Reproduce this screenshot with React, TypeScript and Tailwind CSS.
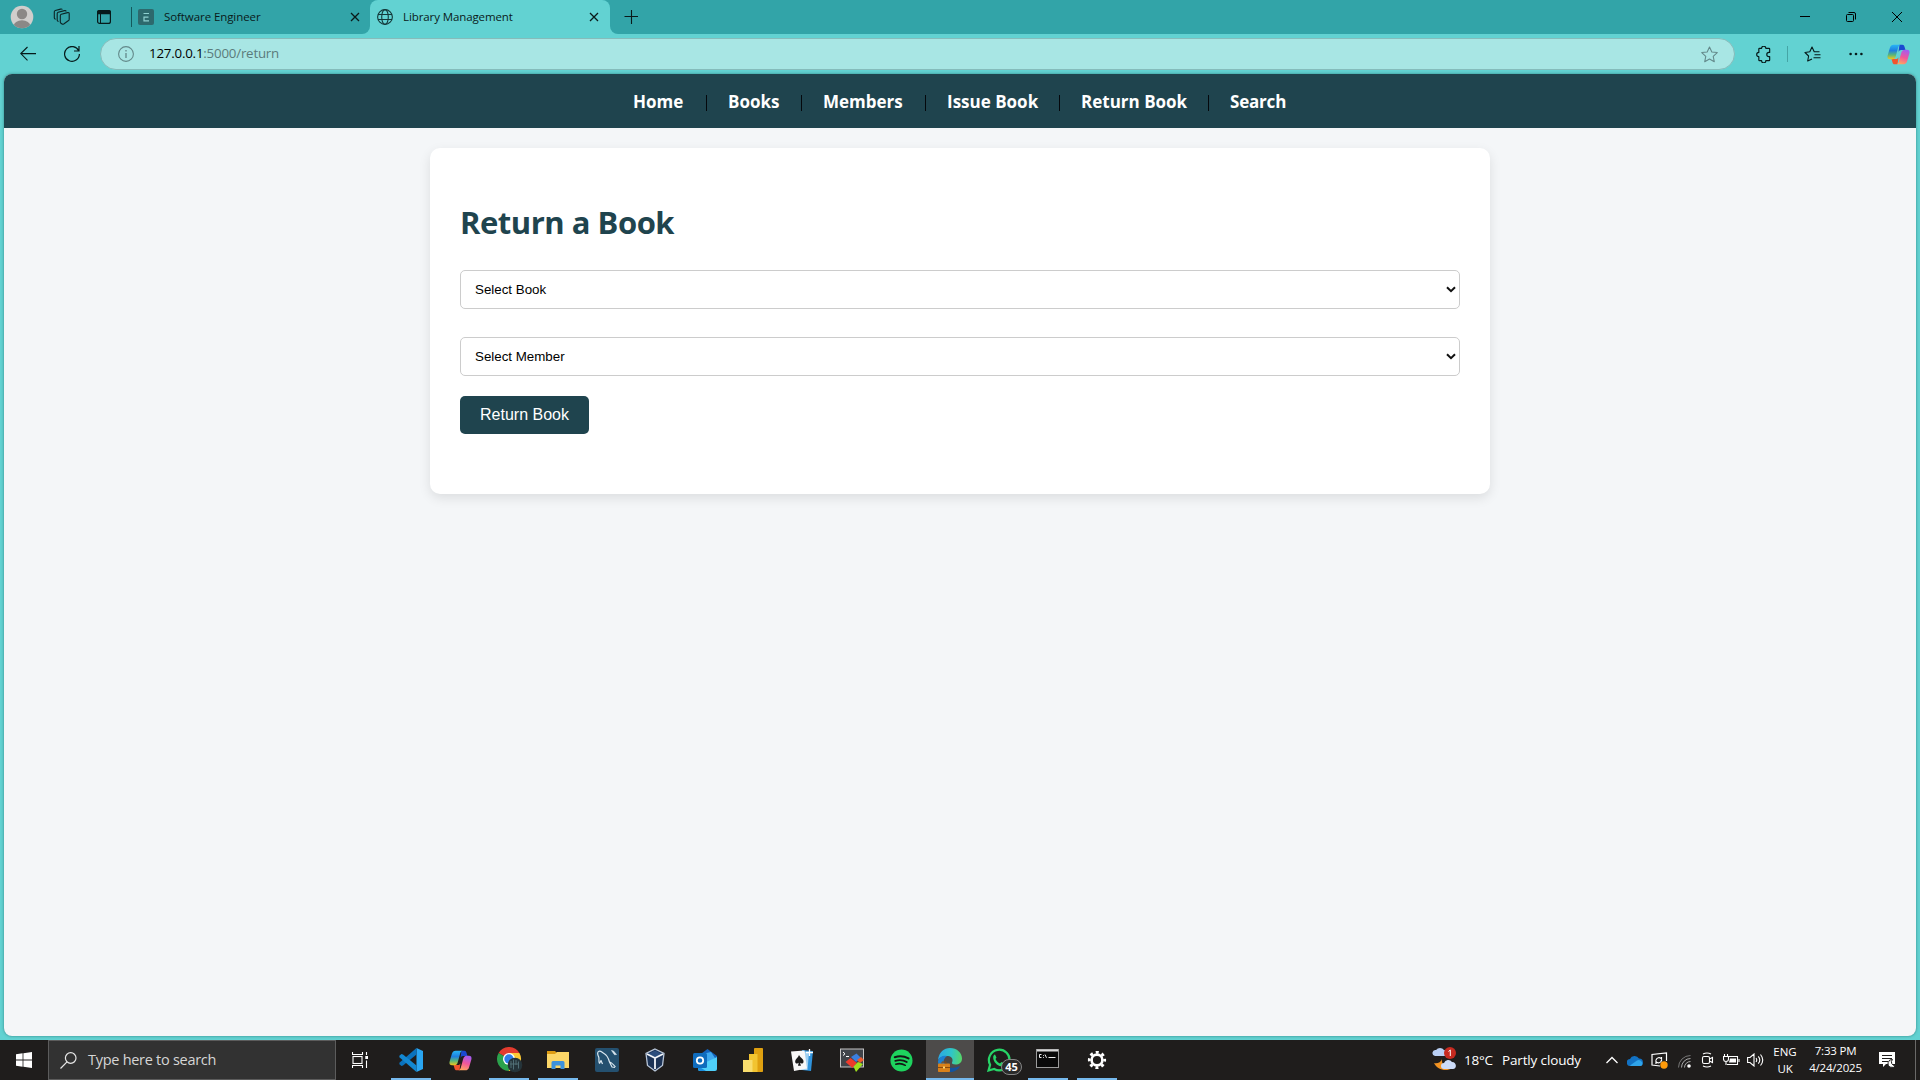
import type { ReactNode } from "react";

const NAV = [
  { label: "Home", cls: "w-[51px]" },
  { label: "Books", cls: "w-[51px]" },
  { label: "Members", cls: "w-[80px]" },
  { label: "Issue Book", cls: "w-[90px]" },
  { label: "Return Book", cls: "w-[105px]" },
  { label: "Search", cls: "w-[56px] tracking-[-0.2px]" },
];

function Copilot({ id, className }: { id: string; className: string }) {
  return (
    <svg viewBox="0 0 24 22" className={className}>
      <defs>
        <linearGradient id={`${id}a`} x1="0" y1="0" x2="0" y2="1">
          <stop offset="0" stopColor="#27b5f5" />
          <stop offset="0.4" stopColor="#1e7fe0" />
          <stop offset="0.7" stopColor="#58b87a" />
          <stop offset="1" stopColor="#f6c61a" />
        </linearGradient>
        <linearGradient id={`${id}b`} x1="0.6" y1="0" x2="0.3" y2="1">
          <stop offset="0" stopColor="#a45cf0" />
          <stop offset="0.5" stopColor="#f0569a" />
          <stop offset="1" stopColor="#ffa660" />
        </linearGradient>
      </defs>
      <path d="M13 .8h3c1.400 0 1.900.8 2.300 2.200l1 3.300h-4.600c-1.400 0-2.200.7-2.700 2.200z" fill="#1a49d0" />
      <path d="M11 21.200H8c-1.400 0-1.900-.8-2.300-2.200l-1-3.300h4.600c1.400 0 2.200-.7 2.700-2.200z" fill="#f2542d" />
      <path d="M7 .8h7c-1.500.4-2 1.700-2.500 3.400L9.200 12.500C8.600 14.700 7.700 16 5.500 16H3.200C.8 16 0 14.300.6 12L3 4C3.700 1.700 4.800.8 7 .8z" fill={`url(#${id}a)`} />
      <path d="M17 21.200h-7c1.500-.4 2-1.700 2.500-3.400l2.300-8.300c.6-2.200 1.500-3.500 3.700-3.500h2.300c2.400 0 3.200 1.700 2.600 4l-2.400 8c-.7 2.300-1.800 3.200-4 3.200z" fill={`url(#${id}b)`} />
    </svg>
  );
}

function Cross({ className }: { className: string }) {
  return (
    <svg viewBox="0 0 10 10" className={className}>
      <path d="M1 1l8 8M9 1L1 9" stroke="currentColor" strokeWidth="1.300" fill="none" />
    </svg>
  );
}

function TitleBar() {
  return (
    <div className="flex h-[34px] items-center bg-[#32a4a8] text-[#0a1a1a]">
      <div className="flex h-[34px] w-[132px] items-center pl-[10px]">
        <svg viewBox="0 0 24 24" className="size-[24px]">
          <defs>
            <clipPath id="avatar"><circle cx="12" cy="12" r="11.300" /></clipPath>
          </defs>
          <circle cx="12" cy="12" r="11.300" fill="#d0cecc" />
          <g clipPath="url(#avatar)" fill="#8b8886">
            <circle cx="12" cy="9" r="5.200" />
            <ellipse cx="12" cy="21" rx="8.300" ry="5.800" />
          </g>
        </svg>
        <svg viewBox="0 0 18 18" className="ml-[19px] size-[18px]" fill="none" stroke="#0b2425" strokeWidth="1.100" strokeLinejoin="round">
          <path d="M7.300 7.600q0-1 1-1.300l6.300-1.700q1.600-.3 1.600 1.200v5.400q0 1-1 1.600l-4.500 3.200q-1 .6-2-.2l-1-.8q-.4-.4-.4-1z" />
          <path d="M5.500 13.600l-.8-.6q-.5-.4-.5-1V5.600q0-1 1-1.300l6.300-1.700q1.400-.3 1.700.9" />
          <path d="M2.600 11.400l-.8-.6q-.5-.4-.5-1V3.800q0-1 1-1.300l5.300-1.400q1.400-.3 1.700.6" />
        </svg>
        <svg viewBox="0 0 16 16" className="ml-[25px] size-[16px]">
          <rect x="1.600" y="1.600" width="12.800" height="12.800" rx="2" fill="none" stroke="#071a1b" strokeWidth="1.200" />
          <path d="M1 5.200V3a2 2 0 0 1 2-2h10a2 2 0 0 1 2 2v2.200z" fill="#071a1b" />
          <path d="M4.500 5v9.500" stroke="#071a1b" />
        </svg>
        <div className="ml-auto h-[20px] w-px bg-[#14595c]" />
      </div>
      <div className="bg-[#62d2d2]">
        <div className="flex h-[34px] w-[238px] items-center rounded-br-lg bg-[#32a4a8] pl-[6px]">
          <div className="flex size-[16px] items-center justify-center rounded-[2px] bg-[#2d696d]">
            <svg viewBox="0 0 8 10" className="h-[10px] w-[8px]" stroke="#8fd0d0" strokeWidth="1.200" fill="none">
              <path d="M1.500 1.500H7M1.500 5.200H6.500M1.500 8.800H7M2 4.600v4.800" />
            </svg>
          </div>
          <span className="ml-[10px] font-['Open_Sans'] text-[11.500px] tracking-[-0.080px] whitespace-nowrap">Software Engineer</span>
          <Cross className="mr-[10px] ml-auto size-[10px]" />
        </div>
      </div>
      <div className="flex h-[34px] w-[240px] items-center rounded-t-lg bg-[#62d2d2] pl-[7px]">
        <svg viewBox="0 0 16 16" className="size-[16px]" fill="none" stroke="#14393a" strokeWidth="1.100">
          <circle cx="8" cy="8" r="7.400" />
          <ellipse cx="8" cy="8" rx="3.300" ry="7.400" />
          <path d="M1 5.500h14M1 10.500h14" />
        </svg>
        <span className="ml-[10px] font-['Open_Sans'] text-[11.500px] tracking-[-0.100px] whitespace-nowrap">Library Management</span>
        <Cross className="mr-[11px] ml-auto size-[10px]" />
      </div>
      <div className="bg-[#62d2d2]">
        <div className="flex h-[34px] w-[40px] items-center rounded-bl-lg bg-[#32a4a8] pl-[14px]">
          <svg viewBox="0 0 14 14" className="size-[14px]" stroke="#0a1a1a" strokeWidth="1.100">
            <path d="M7.500 0v14M.5 6.500h14" />
          </svg>
        </div>
      </div>
      <div className="ml-auto flex h-[34px] items-center gap-[36px] pr-[18px]">
        <svg viewBox="0 0 10 10" className="size-[10px]" stroke="#000"><path d="M0 4.500h10" /></svg>
        <svg viewBox="0 0 10 10" className="size-[10px]" stroke="#000" fill="none">
          <rect x="0.500" y="2.500" width="7" height="7" rx="1" />
          <path d="M2.500 .5H8A1.500 1.500 0 0 1 9.500 2v5.500" />
        </svg>
        <svg viewBox="0 0 10 10" className="size-[10px]" stroke="#000"><path d="M0 0l10 10M10 0L0 10" /></svg>
      </div>
    </div>
  );
}

const STAR = "M8 .9l2.200 4.700 5.100.6-3.800 3.500 1 5.100L8 12.300l-4.500 2.500 1-5.100L.7 6.200l5.100-.6z";

function Toolbar() {
  return (
    <div className="flex h-[40px] items-center bg-[#62d2d2]">
      <svg viewBox="0 0 16 16" className="ml-[20px] size-[16px]" fill="none" stroke="#061a1a" strokeWidth="1.100">
        <path d="M7.500 1L.8 7.600l6.700 6.700M.8 7.600H16" />
      </svg>
      <svg viewBox="0 0 16 16" className="ml-[28px] size-[16px]" fill="none" stroke="#061a1a" strokeWidth="1.200">
        <path d="M14.700 4.800A7.400 7.400 0 1 0 15.400 8M15 0v5h-5" />
      </svg>
      <div className="ml-[20px] flex h-[32px] w-[1635px] items-center rounded-full border border-[#85bcbb] bg-[#a8e6e4] pl-[17px]">
        <svg viewBox="0 0 16 16" className="size-[16px]" fill="none" stroke="#63898a" strokeWidth="1.100">
          <circle cx="8" cy="8" r="7.400" />
          <path d="M8 7v5M8 4v1.500" strokeWidth="1.300" />
        </svg>
        <span className="ml-[15px] font-['Open_Sans'] text-[13.300px] tracking-[-0.200px] whitespace-nowrap text-[#5b7b7b]">
          <span className="text-black">127.0.0.1</span>:5000/return
        </span>
        <svg viewBox="0 0 16 16" className="mr-[16px] ml-auto size-[17px]" fill="none" stroke="#63898a" strokeLinejoin="round">
          <path d={STAR} />
        </svg>
      </div>
      <svg viewBox="0 0 16 16" className="ml-[20px] size-[17px]" fill="none" stroke="#061a1a" strokeWidth="1.100" strokeLinejoin="round">
        <path d="M4.200 2.200H6.200a2 2 0 0 1 4 0h3q.6 0 .6.600V6h-.7a2 2 0 0 0 0 4h.7v3.200q0 .6-.6.600h-3a2 2 0 0 1-4 0h-2q-.6 0-.6-.6V10a2 2 0 0 1 0-4V2.800q0-.6.600-.6z" />
      </svg>
      <div className="ml-[15px] h-[16px] w-px bg-[#45a5a6]" />
      <svg viewBox="0 0 17 16" className="ml-[16px] h-[16px] w-[17px]" fill="none" stroke="#061a1a" strokeWidth="1.100" strokeLinejoin="round">
        <path d="M8 13l-4.300 2 .9-5L1 6.500l4.800-.7L8 1l2.200 4.800h5.300M10.500 8.800H16.500M9.500 11.800h7" />
      </svg>
      <svg viewBox="0 0 14 4" className="ml-[28px] h-[4px] w-[14px]" fill="#061a1a">
        <circle cx="1.600" cy="2" r="1.300" /><circle cx="7" cy="2" r="1.300" /><circle cx="12.400" cy="2" r="1.300" />
      </svg>
      <Copilot id="tb" className="ml-[24px] h-[21px] w-[23px]" />
    </div>
  );
}

function Select({ label }: { label: string }) {
  return (
    <button type="button" className="flex h-[39px] w-full items-center rounded-[5px] border border-[#ccc] bg-white pr-[3px] pl-[14px] text-black">
      <span className="font-['Liberation_Sans'] text-[13.333px]">{label}</span>
      <svg viewBox="0 0 10 7" className="ml-auto h-[7px] w-[10px]" fill="none" stroke="#101010" strokeWidth="2">
        <path d="M1 1.200l4 4 4-4" />
      </svg>
    </button>
  );
}

function Page() {
  return (
    <div className="mx-[4px] h-[962px] overflow-hidden rounded-lg bg-[#f4f6f8] shadow-[0_0_3px_rgba(0,60,60,0.5)]">
      <nav className="flex h-[54px] items-center bg-[#1f444e] pt-[2px] pl-[629px] font-['Open_Sans'] text-[17px] font-bold text-white">
        {NAV.map((n, i) => (
          <div key={n.label} className="flex items-center">
            {i > 0 && <div className="mt-[2px] mr-[21px] ml-[22px] h-[16px] w-px bg-[#04080c]" />}
            <div className={`${n.cls} whitespace-nowrap`}>{n.label}</div>
          </div>
        ))}
      </nav>
      <main className="mx-auto mt-[20px] h-[346px] w-[1060px] rounded-[10px] bg-white px-[30px] pt-[53px] shadow-[0_4px_12px_rgba(0,0,0,0.1)]">
        <h1 className="h-[43px] font-['Open_Sans'] text-[31px] leading-[43px] font-bold tracking-[-0.480px] text-[#1f444e]">Return a Book</h1>
        <form className="mt-[26px] flex flex-col items-start">
          <Select label="Select Book" />
          <div className="h-[28px]" />
          <Select label="Select Member" />
          <button type="button" className="mt-[20px] flex h-[38px] w-[129px] items-center justify-center rounded-[5px] bg-[#1f444e] font-['Liberation_Sans'] text-[16px] text-white">Return Book</button>
        </form>
      </main>
    </div>
  );
}

function TaskItem({ children, open, active }: { children: ReactNode; open?: boolean; active?: boolean }) {
  return (
    <div className={active ? "mr-px flex h-[40px] w-[48px] flex-col items-center bg-[#4d4b4a]" : "mr-px flex h-[40px] w-[48px] flex-col items-center"}>
      <div className="flex h-[38px] items-center pt-[2px]">{children}</div>
      {(open || active) && <div className={active ? "h-[2px] w-[48px] bg-[#76b9ed]" : "h-[2px] w-[40px] bg-[#76b9ed]"} />}
    </div>
  );
}

function Apps() {
  return (
    <div className="ml-[19px] flex">
      <TaskItem open>
        <svg viewBox="0 0 24 24" className="size-[24px]">
          <path d="M17.500 0L24 3v18l-6.500 3z" fill="#2aa6f2" />
          <path d="M17.500 0v6.500L4 17.500 2.500 18 .4 16.200v-1.500z" fill="#0a72bd" />
          <path d="M17.500 24v-6.500L4 6.500 2.500 6 .4 7.800v1.500z" fill="#1388d2" />
        </svg>
      </TaskItem>
      <TaskItem><Copilot id="tk" className="h-[21px] w-[23px]" /></TaskItem>
      <TaskItem open>
        <svg viewBox="0 0 26 26" className="ml-[2px] size-[26px]">
          <path d="M12 12L1.600 6A12 12 0 0 1 22.400 6z" fill="#e33b2e" />
          <path d="M12 12L1.600 6a12 12 0 0 0 10 18l5.200-9z" fill="#2ba24c" />
          <path d="M12 6h10.400A12 12 0 0 1 11.600 24L17 15z" fill="#fcc934" />
          <circle cx="12" cy="12" r="6" fill="#fff" /><circle cx="12" cy="12" r="4.700" fill="#2f7de9" />
          <circle cx="18" cy="18" r="7.300" fill="#25343a" />
          <path d="M14 14v7M16.500 12.500v10M19 13v5M21.500 14.500v7M13 17h8" stroke="#55747c" strokeWidth="0.900" />
        </svg>
      </TaskItem>
      <TaskItem open>
        <svg viewBox="0 0 22 20" className="h-[20px] w-[22px]">
          <path d="M0 1h8l2 2h12v4H0z" fill="#dd9c13" />
          <path d="M0 4h8l2-2h12v16H0z" fill="#fbd667" />
          <path d="M4.500 19v-6.500A1.500 1.500 0 0 1 6 11h10a1.500 1.500 0 0 1 1.500 1.500V19h-4v-3.500h-5V19z" fill="#3d92dc" />
        </svg>
      </TaskItem>
      <TaskItem>
        <svg viewBox="0 0 24 24" className="size-[24px]" fill="none" stroke="#dbe8f0" strokeLinejoin="round">
          <rect width="24" height="24" rx="2" fill="#24506f" stroke="none" />
          <path d="M4.500 15.500c-1.300-2 0-4.500-.8-6.500C2.500 6.500 2 4 4 3.200 6 2.600 7 4.500 9 5.500c3 1.500 4.500 5 5.500 8.500 2 .5 4 2.500 6 5M4.500 15.500l1.500-3 1.500 3.500M14.500 14l2.500 5 3 .5" strokeWidth="1.200" />
          <path d="M16.500 2.500l2 .5 3 3.500-2 .2-1.200-1.700z" fill="#dbe8f0" strokeWidth="0.600" />
        </svg>
      </TaskItem>
      <TaskItem>
        <svg viewBox="0 0 20 24" className="mr-[2px] h-[24px] w-[20px]">
          <path d="M10 1l9 4.500-1.500 12L10 23l-7.500-5.500L1 5.500z" fill="#1c3356" stroke="#b9c6d8" strokeWidth="1.300" />
          <path d="M10 2.500L17 6l-7 3.500L3 6z" fill="#2b4d7d" />
          <path d="M2 6l8 4 8-4M10 10v11" stroke="#f3f6fa" strokeWidth="1.800" fill="none" />
        </svg>
      </TaskItem>
      <TaskItem>
        <svg viewBox="0 0 24 24" className="size-[24px]">
          <path d="M5 8L14.500 1 24 8v6H5z" fill="#1463bb" />
          <path d="M9 6l9-2 4 6-8 6H9z" fill="#3fa9ee" />
          <path d="M24 9v12a2 2 0 0 1-2 2H7a2 2 0 0 1-2-2v-3z" fill="#4fd0fa" />
          <path d="M5 18l8 5H7a2 2 0 0 1-2-2z" fill="#1a8fe0" />
          <rect y="5" width="14" height="15" rx="1.500" fill="#0f6cbd" />
          <circle cx="7" cy="12.500" r="3.200" fill="none" stroke="#fff" strokeWidth="1.800" />
        </svg>
      </TaskItem>
      <TaskItem>
        <svg viewBox="0 0 20 24" className="mr-[2px] h-[24px] w-[20px]">
          <rect x="11" width="9" height="24" rx="0.800" fill="#dfa010" />
          <path d="M6 6h8.500v18H6z" fill="#f2c431" />
          <path d="M0 12h9.500v12H0z" fill="#f9dd6d" />
        </svg>
      </TaskItem>
      <TaskItem>
        <svg viewBox="0 0 22 24" className="mr-[2px] h-[24px] w-[22px]">
          <path d="M11 2l11 1-2 20-9-1z" fill="#2f93dc" />
          <path d="M9 3l9 1-1.500 18L9 22z" fill="#9fd0f2" />
          <path d="M0 3.500L13.500 2.500 16 20.500 3 23z" fill="#f8f8f8" />
          <path d="M8 7c1.500 3 5 4 4.500 7-.3 1.800-2.500 2-3.500.8l1 3H7l.7-3c-1 1.300-3.200 1-3.500-.8C4 11 7 10 8 7z" fill="#1a1a1a" />
          <path d="M18.500 1v7M15 4.500h7" stroke="#fff" strokeWidth="1.300" />
        </svg>
      </TaskItem>
      <TaskItem>
        <svg viewBox="0 0 24 24" className="size-[24px]">
          <rect x="0.500" y="1" width="23" height="18" fill="#40444a" stroke="#c6c6c6" />
          <path d="M3 4l2 1.800L3 7.500M6 8.500h3" stroke="#fff" fill="none" />
          <path d="M11 9l5.500-3.500L21 10l-5 4z" fill="#3a7fe0" />
          <path d="M5.500 14l5-4 6.500 5-4.500 5z" fill="#ee3b2c" />
          <path d="M17 12l4-3 3 3-4 3z" fill="#ee5b2c" />
          <path d="M13.500 18.500L18 14l5 2-7 8z" fill="#9fe01e" />
        </svg>
      </TaskItem>
      <TaskItem>
        <svg viewBox="0 0 24 24" className="size-[23px]" fill="none" stroke="#141414" strokeLinecap="round">
          <circle cx="12" cy="12" r="11.500" fill="#1ed35e" stroke="none" />
          <path d="M5 8.500c5-1.500 10-1 14.300 1.300" strokeWidth="2.200" /><path d="M5.500 12.300c4.300-1.200 8.500-.8 12 1.300" strokeWidth="1.900" /><path d="M6 15.800c3.600-1 7-.6 10 1.200" strokeWidth="1.600" />
        </svg>
      </TaskItem>
      <TaskItem active>
        <svg viewBox="0 0 24 24" className="size-[24px]">
          <defs>
            <linearGradient id="edge" x1="0" y1="0.300" x2="1" y2="0.400">
              <stop offset="0" stopColor="#2ba7e6" /><stop offset="0.550" stopColor="#2fc5c9" /><stop offset="1" stopColor="#55d66a" />
            </linearGradient>
          </defs>
          <path d="M0 12C1 4 6 0 12 0c7 0 12 5 12 10.500 0 4-3 6-6.500 6-2.500 0-4-1-3.500-2 1.500-3 0-6-4-6.500C6 7.500 2 9 0 12z" fill="url(#edge)" />
          <path d="M0 13c1-4 5-6 9-5-3 2-4 5-3 9 1 4 5 6 9 6-9 3-15-3-15-10z" fill="#1c7fd2" />
          <path d="M7 13c-1 6 6 9 15 5-2 4-6 6-10 6-4-1-8-6-5-11z" fill="#14549e" />
          <rect y="15.500" width="12" height="8.500" rx="0.800" fill="#d9811a" /><path d="M0 19.500h12M4 15.500V14h4v1.500" stroke="#8a4a0c" fill="none" /><rect x="5" y="18.500" width="2" height="2" fill="#ffd36a" />
        </svg>
      </TaskItem>
      <TaskItem>
        <div className="relative">
          <svg viewBox="0 0 24 24" className="size-[24px]">
            <path d="M1.500 22.500l1.600-5.700A10.300 10.300 0 1 1 7.200 21z" fill="none" stroke="#27d467" strokeWidth="2.200" />
            <path d="M8 6.500l1.500 3-1 1.500c1 2 2.500 3.500 4.500 4.500l1.500-1.500 3 1.500c0 2-1.500 3-3.500 2.800C10 17.500 6.500 14 6.200 10 6 8 7 6.500 8 6.500z" fill="#27d467" />
          </svg>
          <div className="absolute top-[11px] left-[14px] flex h-[16px] w-[21px] items-center justify-center rounded-full border border-[#868686] bg-[#2b2b2b] font-['Open_Sans'] text-[11px] font-bold text-white">45</div>
        </div>
      </TaskItem>
      <TaskItem open>
        <svg viewBox="0 0 23 19" className="mr-[2px] mb-[3px] h-[19px] w-[23px]">
          <rect x="0.500" y="0.500" width="22" height="18" fill="#0a0a0a" stroke="#9c9c9c" /><path d="M1 1.500h21" stroke="#d8d8d8" strokeWidth="2" />
          <path d="M5.500 5.500H3.500v3h2M7.500 6v0.800M7.500 8v.8M9 5.500l1.500 3.300M12.500 8.500h7" stroke="#eee" fill="none" />
        </svg>
      </TaskItem>
      <TaskItem open>
        <svg viewBox="0 0 20 20" className="size-[20px]" stroke="#fff" fill="none">
          <circle cx="10" cy="10" r="5.400" strokeWidth="2.600" />
          <circle cx="10" cy="10" r="7.700" strokeWidth="2.800" strokeDasharray="3 3.047" strokeDashoffset="1.500" />
        </svg>
      </TaskItem>
    </div>
  );
}

function Tray() {
  return (
    <div className="ml-auto flex h-[40px] items-center font-['Open_Sans'] text-white">
      <svg viewBox="0 0 24 24" className="mb-[2px] size-[24px]">
        <path d="M10 12a8 8 0 0 0 10 9c-5 4-15 2-18-5 3 1 7-.5 8-4z" fill="#f39322" />
        <path d="M3 9a3 3 0 0 1 1-6 5 5 0 0 1 8 0c4 0 4 6 0 6z" fill="#b9cff4" />
        <path d="M12 22a3 3 0 0 1 0-6 4.500 4.500 0 0 1 8-1c5 0 5 7 1 7z" fill="#cddcf8" />
        <circle cx="18" cy="6" r="6" fill="#c62a20" />
        <path d="M16.500 4.500L18.300 3v6" stroke="#fff" fill="none" />
      </svg>
      <span className="ml-[8px] w-[29px] text-[13.500px] tracking-[-0.200px] whitespace-nowrap">18°C</span>
      <span className="ml-[9px] w-[79px] text-[13.500px] tracking-[-0.150px] whitespace-nowrap">Partly cloudy</span>
      <svg viewBox="0 0 12 8" className="ml-[25px] h-[8px] w-[12px]" fill="none" stroke="#fff" strokeWidth="1.300"><path d="M.5 7L6 1.500 11.500 7" /></svg>
      <svg viewBox="0 0 16 11" className="ml-[9px] h-[11px] w-[16px]">
        <path d="M3.500 11A3.500 3.500 0 0 1 3 4 5 5 0 0 1 12 3.500 3.800 3.800 0 0 1 13 11z" fill="#1272c4" />
        <path d="M3 10.500L10 5.500a3.800 3.800 0 0 1 5.500 3.500 2 2 0 0 1-2 2H4z" fill="#2fa4ea" />
      </svg>
      <svg viewBox="0 0 17 17" className="ml-[8px] size-[17px]" fill="none" stroke="#fff" strokeWidth="1.200">
        <path d="M15.500 9V1L1 2.500V13l8 1M5 8.500a3 3 0 0 1 5.500-1.500V5M10.500 8a3 3 0 0 1-5.500 1.500v2.500" />
        <circle cx="13" cy="13" r="3.700" fill="#ff9b0a" stroke="none" />
      </svg>
      <svg viewBox="0 0 13 13" className="mt-[2px] ml-[10px] size-[13px]" fill="none">
        <path d="M.5 12.500a12 12 0 0 1 12-12" stroke="#777" /><path d="M3.500 12.500a9 9 0 0 1 9-9M6.500 12.500a6 6 0 0 1 6-6" stroke="#aaa" /><circle cx="11" cy="11" r="1.800" fill="#fff" />
      </svg>
      <svg viewBox="0 0 13 16" className="ml-[10px] h-[16px] w-[13px]" fill="none" stroke="#fff" strokeWidth="1.100">
        <rect x="1.500" y="4.500" width="7" height="7" rx="1.500" /><path d="M8.500 7l3-1.500v5l-3-1.500M2 2Q6 0 10 2M2 14q4 2 8 0" />
      </svg>
      <svg viewBox="0 0 17 12" className="ml-[9px] h-[12px] w-[17px]" fill="none" stroke="#fff" strokeWidth="1.100">
        <path d="M6 2.500h8.500v8H4M16 5v3M1.500 0v2.500M4.500 0v2.500M.5 2.500h5V5a2 2 0 0 1-5 0zM3 7v4" /><path d="M7 4.500h6v4H6z" fill="#fff" stroke="none" />
      </svg>
      <svg viewBox="0 0 17 14" className="ml-[7px] h-[14px] w-[17px]" fill="none" stroke="#fff" strokeWidth="1.100">
        <path d="M.6 4.500H3l4-3.500v12L3 9.500H.6zM9 5q1.500 2 0 4M11.300 3.300q3 3.700 0 7.400M13.500 1.500q4.500 5.500 0 11" />
      </svg>
      <div className="ml-[9px] flex w-[24px] flex-col items-center text-[11.500px] leading-[17px]">
        <span>ENG</span><span className="tracking-[-0.300px]">UK</span>
      </div>
      <div className="mb-[2px] ml-[12px] flex w-[53px] flex-col items-center text-[11.500px] leading-[17px] tracking-[-0.200px] whitespace-nowrap">
        <span>7:33 PM</span><span>4/24/2025</span>
      </div>
      <svg viewBox="0 0 17 17" className="mr-[19px] ml-[17px] size-[17px]">
        <path d="M0 0h16v12H7l-3 3v-3H0z" fill="#fff" /><path d="M3 3.500h10M3 6.500h10M3 9.500h6" stroke="#1f1d1c" />
        <path d="M13.500 7.500a4 4 0 1 0 3 6 3.500 3.500 0 0 1-3-6z" fill="#fff" stroke="#1f1d1c" />
      </svg>
      <div className="mr-[4px] h-[40px] w-px bg-[#6a6968]" />
    </div>
  );
}

function Taskbar() {
  return (
    <div className="mt-[4px] flex h-[40px] items-center bg-[#1f1d1c]">
      <svg viewBox="0 0 16 16" className="ml-[16px] size-[16px]" fill="#fff">
        <path d="M0 2.200L6.600 1.300v6.200H0zM7.400 1.200L16 0v7.500H7.400zM0 8.400h6.600v6.300L0 13.800zM7.400 8.400H16V16l-8.600-1.200z" />
      </svg>
      <div className="ml-[16px] flex h-[40px] w-[288px] items-center border border-[#5c5c5c] bg-[#323232] pl-[11px]">
        <svg viewBox="0 0 17 17" className="size-[17px]" fill="none" stroke="#e6e6e6" strokeWidth="1.200">
          <circle cx="10.700" cy="6" r="5.300" /><path d="M7 9.800L.5 16.500" />
        </svg>
        <span className="ml-[11px] font-['Open_Sans'] text-[14.500px] tracking-[-0.280px] whitespace-nowrap text-[#d6d6d6]">Type here to search</span>
      </div>
      <svg viewBox="0 0 16 16" className="ml-[16px] size-[16px]" fill="none" stroke="#fff" strokeWidth="1.100">
        <rect x="1" y="4.500" width="9" height="7" /><path d="M.5 0v2.500h10V0M.5 16v-2.500h10V16M14.500 0v3M14.500 8.500V16" /><rect x="13.300" y="4" width="2.700" height="3" fill="#fff" stroke="none" />
      </svg>
      <Apps />
      <Tray />
    </div>
  );
}

export default function App() {
  return (
    <div className="h-[1080px] w-[1920px] overflow-hidden bg-[#62d2d2]">
      <TitleBar />
      <Toolbar />
      <Page />
      <Taskbar />
    </div>
  );
}
